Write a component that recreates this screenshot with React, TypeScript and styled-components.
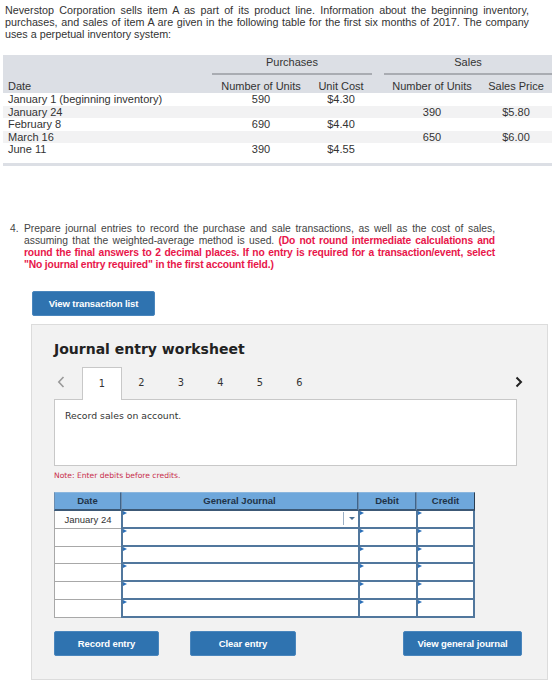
import React from "react";
import styled, { createGlobalStyle } from "styled-components";

const Global = createGlobalStyle`
  html, body { margin: 0; padding: 0; background: #fff; }
  body { font-family: "Liberation Sans", Arial, sans-serif; color: #333; }
`;

const Page = styled.div`
  width: 560px;
  height: 686px;
  overflow: hidden;
  position: relative;
`;

const Intro = styled.p`
  margin: 4px 0 0 5px;
  width: 524px;
  font-size: 10.75px;
  line-height: 12px;
  text-align: justify;
  color: #333;
`;

const DataTable = styled.div`
  margin: 15px 0 0 3px;
  width: 549px;
  display: grid;
  grid-template-columns: 209px 98px 62px 12px 96px 72px;
  font-size: 11px;
  color: #333;
`;

const HeadCell = styled.div<{ $span?: number; $align?: string; $h: number }>`
  grid-column: span ${(p) => p.$span ?? 1};
  background: #dcdfe5;
  height: ${(p) => p.$h}px;
  display: flex;
  align-items: flex-end;
  justify-content: ${(p) => p.$align ?? "center"};
  padding-left: ${(p) => (p.$align === "flex-start" ? "5px" : "0")};
  line-height: 12px;
  box-sizing: border-box;
  padding-bottom: 1px;
`;

const GroupCell = styled.div<{ $span?: number; $line?: boolean }>`
  grid-column: span ${(p) => p.$span ?? 1};
  background: #dcdfe5;
  height: 20px;
  box-sizing: border-box;
  text-align: center;
  padding-top: 1px;
  line-height: 12px;
  border-bottom: ${(p) => (p.$line ? "2px solid #a9acb2" : "none")};
`;

const GroupWrap = styled.div<{ $span?: number }>`
  grid-column: span ${(p) => p.$span ?? 1};
  background: #dcdfe5;
  height: 20px;
`;

const Cell = styled.div<{ $alt?: boolean; $align?: string }>`
  background: ${(p) => (p.$alt ? "#f2f2f3" : "#fff")};
  height: 12.6px;
  line-height: 12.6px;
  text-align: ${(p) => p.$align ?? "center"};
  padding-left: ${(p) => (p.$align === "left" ? "5px" : "0")};
  white-space: nowrap;
`;

const Spacer = styled.div`
  grid-column: span 6;
  height: 7px;
`;

const BottomBar = styled.div`
  grid-column: span 6;
  height: 3px;
  background: #dcdfe5;
`;

const Question = styled.div`
  margin: 57px 0 0 10px;
  display: flex;
  font-size: 10.3px;
  line-height: 12px;
  color: #444;
`;

const QNum = styled.span`
  width: 14px;
  flex: none;
`;

const QText = styled.p`
  margin: 0;
  width: 471px;
  text-align: justify;
`;

const Red = styled.strong`
  color: #e8164a;
  font-weight: bold;
  letter-spacing: -0.15px;
`;

const BlueButton = styled.button<{ $w: number }>`
  width: ${(p) => p.$w}px;
  height: 25px;
  background: #2f73b0;
  border: 1px solid #4a86bd;
  border-radius: 2px;
  color: #fff;
  font-family: "Liberation Sans", Arial, sans-serif;
  font-weight: bold;
  font-size: 9.5px;
  letter-spacing: -0.1px;
  padding: 0;
  cursor: pointer;
`;

const TxRow = styled.div`
  margin: 20px 0 0 32px;
`;

const Panel = styled.div`
  margin: 8px 0 0 31px;
  width: 517px;
  height: 356px;
  box-sizing: border-box;
  background: #f2f2f2;
  border: 1px solid #dcdcdc;
  padding: 15px 30px 0 22px;
  display: flex;
  flex-direction: column;
`;

const Title = styled.h2`
  margin: 0;
  font-family: "DejaVu Sans", Verdana, sans-serif;
  font-weight: bold;
  font-size: 14px;
  line-height: 18px;
  color: #222;
`;

const TabsRow = styled.div`
  margin-top: 9px;
  display: flex;
  align-items: stretch;
  height: 31px;
  position: relative;
  z-index: 1;
`;

const Arrow = styled.div`
  width: 28px;
  display: flex;
  align-items: center;
  padding-left: 3px;
  box-sizing: border-box;
`;

const Tab = styled.div<{ $active?: boolean }>`
  width: 39.5px;
  box-sizing: border-box;
  display: flex;
  align-items: center;
  justify-content: center;
  font-family: "DejaVu Sans", Verdana, sans-serif;
  font-size: 9.8px;
  color: #333;
  background: ${(p) => (p.$active ? "#fff" : "transparent")};
  border: 1px solid ${(p) => (p.$active ? "#c8c8c8" : "transparent")};
  border-bottom: none;
  height: ${(p) => (p.$active ? "33px" : "31px")};
`;

const TabFill = styled.div`
  flex: 1;
`;

const NextArrow = styled.div`
  width: 14px;
  display: flex;
  align-items: center;
  margin-right: -12px;
`;

const ContentBox = styled.div`
  height: 67px;
  margin-top: 1px;
  box-sizing: border-box;
  background: #fff;
  border: 1px solid #c8c8c8;
  padding: 10px 10px;
  font-family: "DejaVu Sans", Verdana, sans-serif;
  font-size: 9.3px;
  color: #333;
`;

const Note = styled.div`
  margin-top: 5px;
  font-family: "DejaVu Sans", Verdana, sans-serif;
  font-size: 7.6px;
  line-height: 10px;
  color: #c8304d;
`;

const Journal = styled.div`
  margin-top: 11px;
  width: 421px;
  display: grid;
  grid-template-columns: 67px 237px 58px 59px;
  grid-template-rows: 19px;
  grid-auto-rows: 17.8px;
  font-family: "Liberation Sans", Arial, sans-serif;
`;

const JHead = styled.div<{ $last?: boolean }>`
  box-sizing: border-box;
  background: #6ea7db;
  border-top: 1px solid #8ab6de;
  border-right: 1px solid ${(p) => (p.$last ? "#2c3e50" : "#3f648a")};
  border-bottom: 2px solid #3c5875;
  border-left: 1px solid #6b8db0;
  display: flex;
  align-items: center;
  justify-content: center;
  font-weight: bold;
  font-size: 9.5px;
  color: #1f3347;
`;

const DateCell = styled.div`
  box-sizing: border-box;
  background: #fff;
  border: 1px solid #a8a8a8;
  border-top: none;
  border-right: none;
  display: flex;
  align-items: center;
  justify-content: center;
  font-size: 9.5px;
  color: #333;
`;

const InputCell = styled.div<{ $last?: boolean }>`
  position: relative;
  box-sizing: border-box;
  background: #fff;
  border: 2px solid #51779d;
  border-top: none;
  border-right-width: ${(p) => (p.$last ? "2px" : "0")};
  display: flex;
  justify-content: flex-end;
  align-items: center;
`;

const Flag = styled.span`
  position: absolute;
  left: 0;
  top: 0;
  width: 0;
  height: 0;
  border-top: 2.5px solid transparent;
  border-bottom: 2.5px solid transparent;
  border-left: 4px solid #2b6fb8;
`;

const DropSep = styled.span`
  width: 1px;
  height: 13px;
  background: #9bb0c6;
  margin-right: 5px;
`;

const DropArrow = styled.span`
  width: 0;
  height: 0;
  border-left: 3.5px solid transparent;
  border-right: 3.5px solid transparent;
  border-top: 3.5px solid #4a6f93;
  margin-right: 3px;
`;

const ButtonsRow = styled.div`
  margin-top: 13px;
  display: flex;
  width: 468px;
`;

const ButtonGap = styled.div<{ $w: number }>`
  width: ${(p) => p.$w}px;
`;

const ChevronLeft = () => (
  <svg width="8" height="12" viewBox="0 0 8 12">
    <path d="M6.5 1 L1.8 6 L6.5 11" fill="none" stroke="#9a9a9a" strokeWidth="1.6" />
  </svg>
);

const ChevronRight = () => (
  <svg width="8" height="12" viewBox="0 0 8 12">
    <path d="M1.5 1.5 L6 6 L1.5 10.5" fill="none" stroke="#222" strokeWidth="2" />
  </svg>
);

const rows = [
  { date: "January 1 (beginning inventory)", pu: "590", pc: "$4.30", su: "", sp: "" },
  { date: "January 24", pu: "", pc: "", su: "390", sp: "$5.80" },
  { date: "February 8", pu: "690", pc: "$4.40", su: "", sp: "" },
  { date: "March 16", pu: "", pc: "", su: "650", sp: "$6.00" },
  { date: "June 11", pu: "390", pc: "$4.55", su: "", sp: "" },
];

export default function App() {
  return (
    <Page>
      <Global />
      <Intro>
        Neverstop Corporation sells item A as part of its product line. Information about the beginning inventory,
        purchases, and sales of item A are given in the following table for the first six months of 2017. The company
        uses a perpetual inventory system:
      </Intro>

      <DataTable>
        <GroupWrap />
        <GroupCell $span={2} $line>Purchases</GroupCell>
        <GroupWrap />
        <GroupCell $span={2} $line>Sales</GroupCell>

        <HeadCell $h={18} $align="flex-start">Date</HeadCell>
        <HeadCell $h={18}>Number of Units</HeadCell>
        <HeadCell $h={18}>Unit Cost</HeadCell>
        <HeadCell $h={18} />
        <HeadCell $h={18}>Number of Units</HeadCell>
        <HeadCell $h={18}>Sales Price</HeadCell>

        {rows.map((r, i) => (
          <React.Fragment key={r.date}>
            <Cell $alt={i % 2 === 1} $align="left">{r.date}</Cell>
            <Cell $alt={i % 2 === 1}>{r.pu}</Cell>
            <Cell $alt={i % 2 === 1}>{r.pc}</Cell>
            <Cell $alt={i % 2 === 1} />
            <Cell $alt={i % 2 === 1}>{r.su}</Cell>
            <Cell $alt={i % 2 === 1}>{r.sp}</Cell>
          </React.Fragment>
        ))}
        <Spacer />
        <BottomBar />
      </DataTable>

      <Question>
        <QNum>4.</QNum>
        <QText>
          Prepare journal entries to record the purchase and sale transactions, as well as the cost of sales,
          assuming that the weighted-average method is used.{" "}
          <Red>
            (Do not round intermediate calculations and round the final answers to 2 decimal places. If no entry is
            required for a transaction/event, select "No journal entry required" in the first account field.)
          </Red>
        </QText>
      </Question>

      <TxRow>
        <BlueButton $w={123}>View transaction list</BlueButton>
      </TxRow>

      <Panel>
        <Title>Journal entry worksheet</Title>
        <TabsRow>
          <Arrow>
            <ChevronLeft />
          </Arrow>
          {[1, 2, 3, 4, 5, 6].map((n) => (
            <Tab key={n} $active={n === 1}>
              {n}
            </Tab>
          ))}
          <TabFill />
          <NextArrow>
            <ChevronRight />
          </NextArrow>
        </TabsRow>
        <ContentBox>Record sales on account.</ContentBox>
        <Note>Note: Enter debits before credits.</Note>

        <Journal>
          <JHead>Date</JHead>
          <JHead>General Journal</JHead>
          <JHead>Debit</JHead>
          <JHead $last>Credit</JHead>
          {[0, 1, 2, 3, 4, 5].map((i) => (
            <React.Fragment key={i}>
              <DateCell>{i === 0 ? "January 24" : ""}</DateCell>
              <InputCell>
                <Flag />
                {i === 0 && (
                  <>
                    <DropSep />
                    <DropArrow />
                  </>
                )}
              </InputCell>
              <InputCell>
                <Flag />
              </InputCell>
              <InputCell $last>
                <Flag />
              </InputCell>
            </React.Fragment>
          ))}
        </Journal>

        <ButtonsRow>
          <BlueButton $w={105}>Record entry</BlueButton>
          <ButtonGap $w={31} />
          <BlueButton $w={106}>Clear entry</BlueButton>
          <ButtonGap $w={107} />
          <BlueButton $w={119}>View general journal</BlueButton>
        </ButtonsRow>
      </Panel>
    </Page>
  );
}
